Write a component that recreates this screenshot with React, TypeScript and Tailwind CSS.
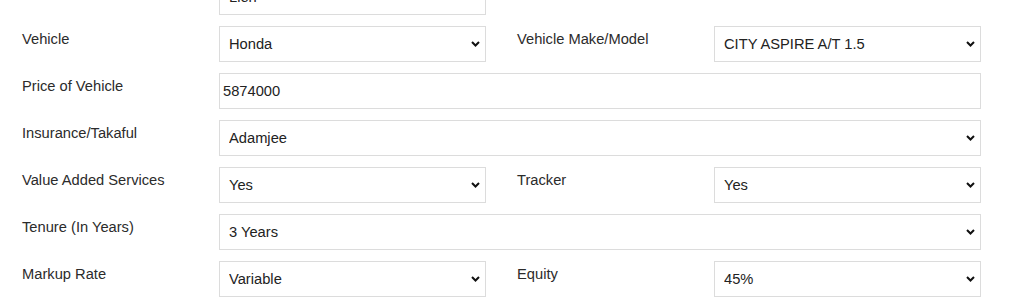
import React from 'react';

const font = { fontFamily: '"Liberation Sans", Arial, sans-serif' };

const Chevron = () => (
  <svg
    className="pointer-events-none absolute right-[6px] top-1/2 -translate-y-1/2"
    width="9"
    height="6"
    viewBox="0 0 9 6"
    fill="none"
  >
    <polyline points="1,1 4.5,4.5 8,1" stroke="#111" strokeWidth="2" />
  </svg>
);

const SelectBox = ({ value, wide }: { value: string; wide?: boolean }) => (
  <div className={`relative ${wide ? 'w-[762px]' : 'w-[267px]'}`}>
    <select
      defaultValue={value}
      className="h-[36px] w-full appearance-none border border-[#dcdcdc] bg-white pl-[9px] pr-6 text-[14.7px] text-[#222] outline-none"
    >
      <option>{value}</option>
    </select>
    <Chevron />
  </div>
);

const Label = ({ children }: { children: React.ReactNode }) => (
  <div className="w-[197px] shrink-0 pt-[3px] text-[14.7px] leading-5 text-[#2b2b2b]">{children}</div>
);

const HalfRow = ({ label, value }: { label: string; value: string }) => (
  <div className="flex w-[495px]">
    <Label>{label}</Label>
    <SelectBox value={value} />
  </div>
);

export default function App() {
  return (
    <div className="h-[302px] w-[1024px] overflow-hidden bg-white" style={font}>
      <div className="-mt-[21px] flex flex-col gap-[11px] pl-[22px]">
        <div className="flex">
          <HalfRow label="Financing Type" value="Lien" />
        </div>

        <div className="flex">
          <HalfRow label="Vehicle" value="Honda" />
          <HalfRow label="Vehicle Make/Model" value="CITY ASPIRE A/T 1.5" />
        </div>

        <div className="flex">
          <Label>Price of Vehicle</Label>
          <input
            defaultValue="5874000"
            className="h-[36px] w-[762px] border border-[#dcdcdc] bg-white px-[3px] text-[14.7px] text-[#222] outline-none"
          />
        </div>

        <div className="flex">
          <Label>Insurance/Takaful</Label>
          <SelectBox value="Adamjee" wide />
        </div>

        <div className="flex">
          <HalfRow label="Value Added Services" value="Yes" />
          <HalfRow label="Tracker" value="Yes" />
        </div>

        <div className="flex">
          <Label>Tenure (In Years)</Label>
          <SelectBox value="3 Years" wide />
        </div>

        <div className="flex">
          <HalfRow label="Markup Rate" value="Variable" />
          <HalfRow label="Equity" value="45%" />
        </div>
      </div>
    </div>
  );
}
